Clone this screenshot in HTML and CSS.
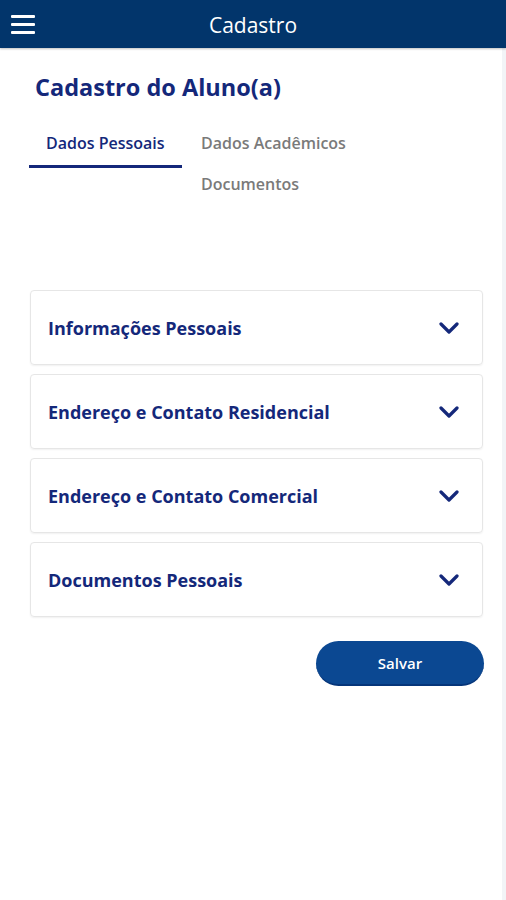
FILE: index.html
```html
<!DOCTYPE html>
<html lang="pt-BR">
<head>
  <meta charset="UTF-8">
  <title>Cadastro</title>
  <link rel="stylesheet" href="styles.css">
</head>
<body>

  <header class="topo">
    <button class="menu-btn" aria-label="Menu">
      <span></span><span></span><span></span>
    </button>
    <div class="topo-titulo">Cadastro</div>
  </header>

  <main class="conteudo">
    <h1>Cadastro do Aluno(a)</h1>

    <nav class="abas">
      <div class="aba ativa">Dados Pessoais</div>
      <div class="aba">Dados Acadêmicos</div>
      <div class="aba aba-extra">Documentos</div>
    </nav>

    <div class="secoes">
      <div class="secao">
        <span>Informações Pessoais</span>
        <svg class="seta" viewBox="0 0 20 12"><path d="M2 2 L10 10 L18 2"/></svg>
      </div>
      <div class="secao">
        <span>Endereço e Contato Residencial</span>
        <svg class="seta" viewBox="0 0 20 12"><path d="M2 2 L10 10 L18 2"/></svg>
      </div>
      <div class="secao">
        <span>Endereço e Contato Comercial</span>
        <svg class="seta" viewBox="0 0 20 12"><path d="M2 2 L10 10 L18 2"/></svg>
      </div>
      <div class="secao">
        <span>Documentos Pessoais</span>
        <svg class="seta" viewBox="0 0 20 12"><path d="M2 2 L10 10 L18 2"/></svg>
      </div>
    </div>

    <div class="acoes">
      <button class="btn-salvar">Salvar</button>
    </div>
  </main>

</body>
</html>
```

FILE: styles.css
```css
body {
  margin: 0;
  font-family: "Open Sans", Arial, sans-serif;
  background-color: #fff;
  color: #14287a;
}

.topo {
  height: 48px;
  background-color: #02356b;
  display: flex;
  align-items: center;
  justify-content: center;
  position: relative;
  box-shadow: 0 1px 2px rgba(0, 0, 0, 0.25);
}

.menu-btn {
  position: absolute;
  left: 11px;
  top: 15px;
  width: 24px;
  height: 19px;
  padding: 0;
  border: none;
  background: none;
  display: flex;
  flex-direction: column;
  justify-content: space-between;
}

.menu-btn span {
  display: block;
  height: 3px;
  background-color: #fff;
  border-radius: 1px;
}

.topo-titulo {
  color: #fff;
  font-size: 21px;
  margin-top: 1px;
}

.conteudo {
  min-height: 852px;
  padding: 0 19px 0 30px;
  border-right: 4px solid #f2f4f7;
  box-sizing: border-box;
}

h1 {
  margin: 0;
  padding: 24px 0 0 5px;
  font-size: 23.5px;
  font-weight: 700;
  line-height: 30px;
  color: #14287a;
}

.abas {
  display: grid;
  grid-template-columns: 153px auto;
  margin: 19px 0 0 -1px;
}

.aba {
  font-size: 16px;
  font-weight: 600;
  color: #7a7a7a;
  padding: 11px 17px 11px 19px;
  line-height: 22px;
}

.aba.ativa {
  color: #14287a;
  border-bottom: 3px solid #14287a;
  padding-left: 17px;
}

.aba-extra {
  grid-column: 2;
  padding-top: 5px;
}

.secoes {
  margin-top: 84px;
  display: flex;
  flex-direction: column;
  gap: 9px;
}

.secao {
  height: 75px;
  border: 1px solid #e6e6e6;
  border-radius: 4px;
  box-shadow: 0 1px 2px rgba(0, 0, 0, 0.06);
  display: flex;
  align-items: center;
  justify-content: space-between;
  padding: 0 23px 0 17px;
  box-sizing: border-box;
  font-size: 18px;
  font-weight: 700;
  color: #14287a;
}

.seta {
  width: 20px;
  height: 12px;
  fill: none;
  stroke: #14287a;
  stroke-width: 3.2;
  stroke-linecap: round;
  stroke-linejoin: round;
}

.acoes {
  display: flex;
  justify-content: flex-end;
  margin-top: 24px;
}

.btn-salvar {
  width: 168px;
  height: 45px;
  margin-right: -1px;
  border: none;
  border-bottom: 2px solid #05357a;
  border-radius: 23px;
  background-color: #0b4892;
  color: #fff;
  font-family: "Open Sans", Arial, sans-serif;
  font-size: 15px;
  font-weight: 600;
  cursor: pointer;
}
```
